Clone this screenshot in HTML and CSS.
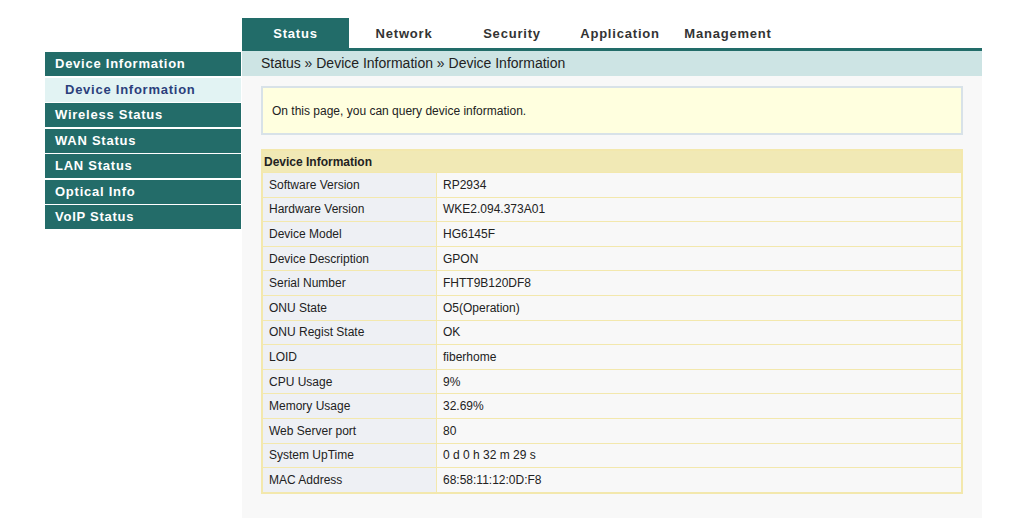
FILE: index.html
```html
<!DOCTYPE html>
<html>
<head>
    <title>Device Information</title>
    <link rel="stylesheet" href="styles.css">
</head>
<body>
    <div class="page">
        <div class="topnav">
            <a class="tab active">Status</a>
            <a class="tab">Network</a>
            <a class="tab">Security</a>
            <a class="tab">Application</a>
            <a class="tab">Management</a>
        </div>

        <ul class="sidebar">
            <li class="menu-head">Device Information</li>
            <li class="menu-sub">Device Information</li>
            <li class="menu-item">Wireless Status</li>
            <li class="menu-item">WAN Status</li>
            <li class="menu-item">LAN Status</li>
            <li class="menu-item">Optical Info</li>
            <li class="menu-item">VoIP Status</li>
        </ul>

        <div class="main">
            <div class="crumbs">Status &raquo; Device Information &raquo; Device Information</div>
            <div class="content">
                <div class="notice">On this page, you can query device information.</div>

                <table class="info">
                    <tr><th colspan="2">Device Information</th></tr>
                    <tr><td class="label">Software Version</td><td>RP2934</td></tr>
                    <tr><td class="label">Hardware Version</td><td>WKE2.094.373A01</td></tr>
                    <tr><td class="label">Device Model</td><td>HG6145F</td></tr>
                    <tr><td class="label">Device Description</td><td>GPON</td></tr>
                    <tr><td class="label">Serial Number</td><td>FHTT9B120DF8</td></tr>
                    <tr><td class="label">ONU State</td><td>O5(Operation)</td></tr>
                    <tr><td class="label">ONU Regist State</td><td>OK</td></tr>
                    <tr><td class="label">LOID</td><td>fiberhome</td></tr>
                    <tr><td class="label">CPU Usage</td><td>9%</td></tr>
                    <tr><td class="label">Memory Usage</td><td>32.69%</td></tr>
                    <tr><td class="label">Web Server port</td><td>80</td></tr>
                    <tr><td class="label">System UpTime</td><td>0 d 0 h 32 m 29 s</td></tr>
                    <tr><td class="label">MAC Address</td><td>68:58:11:12:0D:F8</td></tr>
                </table>
            </div>
        </div>
    </div>
</body>
</html>
```

FILE: styles.css
```css
body {
    margin: 0;
    background: #ffffff;
    font-family: "Liberation Sans", Arial, sans-serif;
    color: #222222;
}

.page {
    display: grid;
    grid-template-columns: 196px 740px;
    grid-template-rows: 33px auto;
    column-gap: 1px;
    margin-left: 45px;
    padding-top: 18px;
}

/* top tabs */
.topnav {
    grid-column: 2;
    grid-row: 1;
    display: flex;
    border-bottom: 3px solid #226c69;
}

.tab {
    width: 108px;
    height: 30px;
    line-height: 31px;
    text-align: center;
    font-size: 13px;
    font-weight: bold;
    letter-spacing: 0.8px;
    color: #333333;
}

.tab.active {
    width: 107px;
    margin-right: 1px;
    background: #226c69;
    color: #ffffff;
}

/* left menu */
.sidebar {
    grid-column: 1;
    grid-row: 2;
    list-style: none;
    margin: 1px 0 0 0;
    padding: 0;
}

.sidebar li {
    height: 24px;
    line-height: 24px;
    margin-bottom: 1.5px;
    font-size: 13px;
    font-weight: bold;
    letter-spacing: 0.75px;
    padding-left: 10px;
}

.menu-head,
.menu-item {
    background: #236c69;
    color: #ffffff;
}

.menu-sub {
    background: #e2f3f3;
    color: #2b3f7c;
    padding-left: 20px !important;
}

/* main area */
.main {
    grid-column: 2;
    grid-row: 2;
    background: #f8f8f8;
    min-height: 467px;
}

.crumbs {
    height: 25px;
    line-height: 25px;
    background: #cde4e4;
    font-size: 14px;
    padding-left: 19px;
}

.content {
    padding: 10px 19px 20px 19px;
}

.notice {
    background: #ffffdf;
    border: 2px solid #d8e2e8;
    height: 45px;
    line-height: 47px;
    padding-left: 9px;
    font-size: 12px;
    color: #222222;
}

.info {
    width: 100%;
    margin-top: 14px;
    border-collapse: collapse;
    border: 2px solid #f3e8ad;
    font-size: 12px;
}

.info th {
    background: #f1e9b5;
    text-align: left;
    font-weight: bold;
    height: 21px;
    padding: 0 0 0 1px;
}

.info td {
    height: 23.6px;
    padding: 0 0 0 6px;
    border: 1px solid #f3e8ad;
    background: #f8f8f8;
    color: #222222;
}

.info td.label {
    width: 167px;
    background: #eef0f4;
}
```
